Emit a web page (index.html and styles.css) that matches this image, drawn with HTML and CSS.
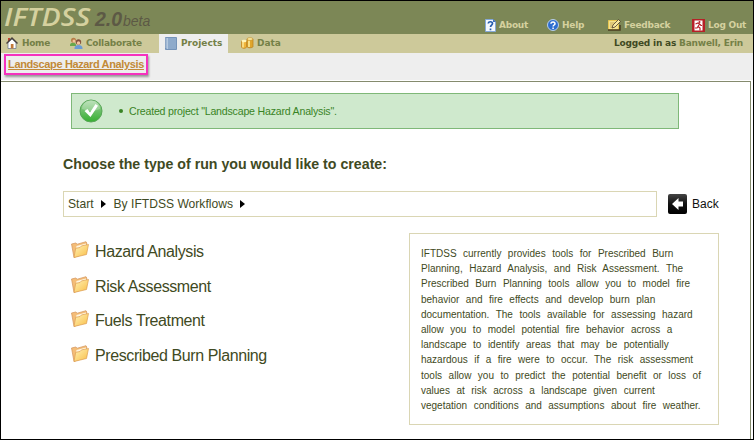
FILE: index.html
```html
<!DOCTYPE html>
<html lang="en">
<head>
<meta charset="utf-8">
<title>IFTDSS 2.0 beta</title>
<link rel="stylesheet" href="styles.css">
</head>
<body>
<svg width="0" height="0" class="defs" aria-hidden="true">
  <defs>
    <linearGradient id="fold" x1="0" y1="0" x2="1" y2="1"><stop offset="0" stop-color="#fff3b8"/><stop offset="1" stop-color="#f9bd45"/></linearGradient>
    <linearGradient id="green" x1="0" y1="0" x2="0" y2="1"><stop offset="0" stop-color="#a9d9a5"/><stop offset=".5" stop-color="#6bbf68"/><stop offset="1" stop-color="#35b030"/></linearGradient>
    <linearGradient id="dark" x1="0" y1="0" x2="0" y2="1"><stop offset="0" stop-color="#444"/><stop offset=".5" stop-color="#111"/><stop offset="1" stop-color="#000"/></linearGradient>
    <symbol id="folder" viewBox="0 0 18 18">
      <path d="M.5 3 4.800 2l1.400 1.200L15 .700l.8 1.300L15 12 3 16.500z" fill="#f4bd78" stroke="#d2935a" stroke-width=".7"/>
      <path d="M5.500 5 15 2.500V5L5 8z" fill="#fff6e0"/>
      <path d="M3 16.500 4.700 7.300 9 6.500l1.500-1.600 7-1.400-2 10z" fill="url(#fold)" stroke="#dc9c50" stroke-width=".7"/>
    </symbol>
  </defs>
</svg>
<div class="app">
  <header class="header">
    <div class="logo"><span class="name">IFTDSS</span><span class="version">2.0</span><span class="beta">beta</span></div>
    <nav class="tools">
      <a class="about"><svg width="11" height="13" viewBox="0 0 11 13"><path d="M.5.500h7.500L10.500 3v9.500H.5z" fill="#f4f8ff" stroke="#85a9d8"/><path d="M8 0v3h3" fill="#4173bd"/><path d="M3.300 4.500c0-2.400 4.200-2.300 4.200 0 0 1.600-2 1.500-2 3.500M5.500 9.500v1.700" fill="none" stroke="#245cae" stroke-width="1.700"/></svg><span>About</span></a>
      <a class="help"><svg width="12" height="12" viewBox="0 0 12 12"><circle cx="6" cy="6" r="5.500" fill="#2e6ed0" stroke="#b9cfe8"/><path d="M4 4.700c0-2.300 4-2.200 4 0C8 6 6.100 6 6.100 7.500M6.100 8.500V10" fill="none" stroke="#fff" stroke-width="1.500"/></svg><span>Help</span></a>
      <a class="feedback"><svg width="13" height="12" viewBox="0 0 13 12"><path d="M.5 1.500h10v9H.5z" fill="#f4e28f" stroke="#e8c650"/><path d="M0 11h12V6" fill="none" stroke="#493c21" stroke-width="1.500"/><path d="M2 4h5M2 6h3M2 8h2" stroke="#b6954b" stroke-width=".7"/><path d="m4 9 1-3L10.500.500 12.500 2.500 7 8z" fill="#f9e9a0" stroke="#47392a" stroke-width=".8"/></svg><span>Feedback</span></a>
      <a class="logout"><svg width="13" height="13" viewBox="0 0 13 13"><path d="M0 0h13v13H0z" fill="#b72027"/><path d="M2.500 1.500h8v10h-8z" fill="#fff"/><circle cx="7.500" cy="3" r="1" fill="#b72027"/><path d="M3.500 5 6 4l1.500 1L6 7.500 8 9v2.500M6 7.500 5 9H3M7.500 5 9 6.500h1" fill="none" stroke="#b72027" stroke-width="1.200"/></svg><span>Log Out</span></a>
    </nav>
  </header>
  <nav class="tabs">
    <a class="tab home"><svg width="12" height="12" viewBox="0 0 12 12"><path d="M2 1h2v3H2z" fill="#c2452e"/><path d="M2 5.500 6 2l4 3.500V11.500H2z" fill="#fff" stroke="#60708d" stroke-width=".7"/><path d="M.5 6.500 6 1l5.500 5.500" fill="none" stroke="#49403d" stroke-width="1.400"/><path d="M4.800 7h2.700v4.500H4.800z" fill="#c27938"/></svg><span>Home</span></a>
    <a class="tab collaborate"><svg width="13" height="12" viewBox="0 0 13 12"><path d="M0 8c0-3 6-3 6 0v1H0z" fill="#68a84a"/><circle cx="3.500" cy="3.200" r="2.500" fill="#b77c47"/><circle cx="4" cy="4" r="1.500" fill="#f1c49a"/><path d="M4.500 11c0-4 8-4 8 0v1h-8z" fill="#6c9cd3"/><circle cx="8.500" cy="5" r="2.700" fill="#84523d"/><circle cx="8.500" cy="6" r="1.700" fill="#f3c5a2"/></svg><span>Collaborate</span></a>
    <a class="tab projects"><svg width="12" height="13" viewBox="0 0 12 13"><path d="M.5.500h11v12H.5z" fill="#8eaacb" stroke="#7593b8"/><path d="M2.500 1v11" stroke="#b5c9df"/><path d="M.5 2h1M.5 4h1M.5 6h1M.5 8h1M.5 10h1" stroke="#fff" stroke-width=".7"/></svg><span>Projects</span></a>
    <a class="tab data"><svg width="13" height="12" viewBox="0 0 13 12"><path d="M6 2v7.500c0 1.700 6 1.700 6 0V2z" fill="#e0a62c" stroke="#b87d1a" stroke-width=".7"/><path d="M8 3.500v6.500" stroke="#fff0a5" stroke-width="1.500"/><ellipse cx="9" cy="2" rx="3" ry="1.300" fill="#fff0a5" stroke="#c18c26" stroke-width=".6"/><path d="M.5 4v6c0 1.800 5 1.800 5 0V4z" fill="#efb43b" stroke="#bd7f18" stroke-width=".7"/><path d="M2 5v5.500" stroke="#fff0a5" stroke-width="1.300"/><ellipse cx="3" cy="4" rx="2.500" ry="1.200" fill="#fff5ba"/></svg><span>Data</span></a>
    <div class="user">Logged in as <span>Banwell, Erin</span></div>
  </nav>
  <div class="subbar"><a class="project"><span>Landscape Hazard Analysis</span></a></div>
  <main class="main">
    <div class="notice">
      <svg width="24" height="24" viewBox="0 0 24 24"><circle cx="12" cy="12" r="11" fill="url(#green)" stroke="#58a657"/><path d="M3 10a9 9 0 0 1 18 0q-9 4-18 0" fill="#fff" opacity=".25"/><path d="m5.500 12 3-2 2.500 3.500L16.500 5 19 6.800 11.500 18z" fill="#fff"/></svg>
      <i class="bullet"></i><span>Created project "Landscape Hazard Analysis".</span>
    </div>
    <h1><span>Choose the type of run you would like to create:</span></h1>
    <div class="path-row">
      <div class="path"><span class="start">Start</span><i class="arrow"></i><span class="flow">By IFTDSS Workflows</span><i class="arrow"></i></div>
      <a class="back"><svg width="19" height="20" viewBox="0 0 19 20"><rect width="19" height="20" rx="2" fill="url(#dark)"/><path d="m4 10 6.500-6V7.500H15v5h-4.500V16z" fill="#fff"/></svg><span>Back</span></a>
    </div>
    <div class="columns">
      <ul class="folders">
        <li><svg width="18" height="18"><use href="#folder"/></svg><span>Hazard Analysis</span></li>
        <li><svg width="18" height="18"><use href="#folder"/></svg><span>Risk Assessment</span></li>
        <li><svg width="18" height="18"><use href="#folder"/></svg><span>Fuels Treatment</span></li>
        <li><svg width="18" height="18"><use href="#folder"/></svg><span>Prescribed Burn Planning</span></li>
      </ul>
      <p class="info">IFTDSS currently provides tools for Prescribed Burn<br>Planning, Hazard Analysis, and Risk Assessment. The<br>Prescribed Burn Planning tools allow you to model fire<br>behavior and fire effects and develop burn plan<br>documentation. The tools available for assessing hazard<br>allow you to model potential fire behavior across a<br>landscape to identify areas that may be potentially<br>hazardous if a fire were to occur. The risk assessment<br>tools allow you to predict the potential benefit or loss of<br>values at risk across a landscape given current<br>vegetation conditions and assumptions about fire weather.</p>
    </div>
  </main>
</div>
</body>
</html>
```
FILE: styles.css
```css
* { box-sizing: border-box; }
body { margin: 0; font-family: "Liberation Sans", Arial, sans-serif; color: #3f4a23; }
.defs { position: absolute; }
svg { flex: none; display: block; }
.app { width: 754px; height: 440px; border: 1px solid #000; background: #fff; overflow: hidden; white-space: nowrap; }
.header { height: 33px; background: #7c8756; display: flex; justify-content: space-between; }
.logo { display: flex; align-items: baseline; padding-left: 3px; font-style: italic; height: 32px; line-height: 31px; }
.name { font-family: "Open Sans", sans-serif; font-size: 25px; font-weight: 600; color: #d5d19f; width: 91px; transform: scaleX(1.14); transform-origin: 0 50%; }
.version { font-size: 19.500px; font-weight: bold; color: #5c5945; width: 28px; }
.beta { font-size: 14px; color: #5c5945; }
.tools { display: flex; padding-top: 17px; font: bold 9px/15px "DejaVu Sans", sans-serif; letter-spacing: -.25px; color: #d5d19f; }
.tools a { display: flex; height: 15px; align-items: center; }
.tools svg { margin-top: -1px; }
.about { width: 62px; gap: 3px; }
.help { width: 61px; gap: 3px; }
.feedback { width: 84px; gap: 3px; }
.logout { width: 61px; gap: 3px; }
.tabs { height: 19px; background: #cdc99a; display: flex; font: bold 9px/19px "DejaVu Sans", sans-serif; color: #748047; }
.tab { display: flex; align-items: center; }
.tab svg { margin-top: -1px; }
.home { width: 64px; padding-left: 5px; gap: 4px; letter-spacing: -.3px; }
.collaborate { width: 94px; padding-left: 5px; gap: 3px; letter-spacing: -.25px; }
.projects { width: 69px; padding-left: 6px; gap: 4px; background: #eee; }
.data { padding-left: 13px; gap: 3px; }
.user { margin-left: auto; padding-right: 10px; color: #3f4a23; letter-spacing: -.2px; }
.user span { color: #748047; }
.subbar { height: 27px; background: #eee; padding: 1px 0 0 3px; }
.project { display: flex; align-items: center; justify-content: center; width: 144px; height: 21px; border: 2px solid #f532be; box-shadow: 1px 2px 2px #999; color: #c28a37; font: bold 11px/17px "Liberation Sans", sans-serif; letter-spacing: -.37px; text-decoration: underline; }
.main { width: 750px; height: 358px; border-top: 1px solid #858b6e; border-right: 1px solid #858b6e; margin-top: 1px; padding: 11px 0 0 62px; }
.notice { margin-left: 8px; width: 608px; height: 36px; border: 1px solid #7fb878; background: #cfe9cd; color: #398425; display: flex; align-items: center; padding-left: 7px; font-size: 10.600px; letter-spacing: -.2px; }
.bullet { width: 4px; height: 4px; border-radius: 50%; background: #398425; margin: 0 6px 0 16px; }
h1 { margin: 24px 0 0; font-size: 14.200px; line-height: 22px; height: 22px; }
.path-row { display: flex; margin-top: 16px; align-items: center; height: 26px; }
.path { width: 594px; height: 26px; border: 1px solid #dad6b4; display: flex; align-items: center; padding-left: 4px; font-size: 12.100px; }
.arrow { border: solid transparent; border-width: 4px 0 4px 5px; border-left-color: #000; margin-left: 7px; }
.flow { margin-left: 8px; }
.back { display: flex; align-items: center; margin-left: 11px; gap: 5px; color: #111; font-size: 12px; }
.columns { display: flex; margin-top: 16px; }
.folders { list-style: none; margin: 0; padding: 2px 0 0 8px; width: 346px; font-size: 16px; letter-spacing: -.4px; }
.folders li { display: flex; height: 34.500px; align-items: flex-start; gap: 6px; line-height: 34px; }
.folders svg { margin-top: 6px; }
.info { margin: 0; width: 310px; height: 192px; border: 1px solid #dad6b4; padding: 12px 0 0 11px; font-size: 10px; line-height: 15.200px; word-spacing: 3.700px; }
```
